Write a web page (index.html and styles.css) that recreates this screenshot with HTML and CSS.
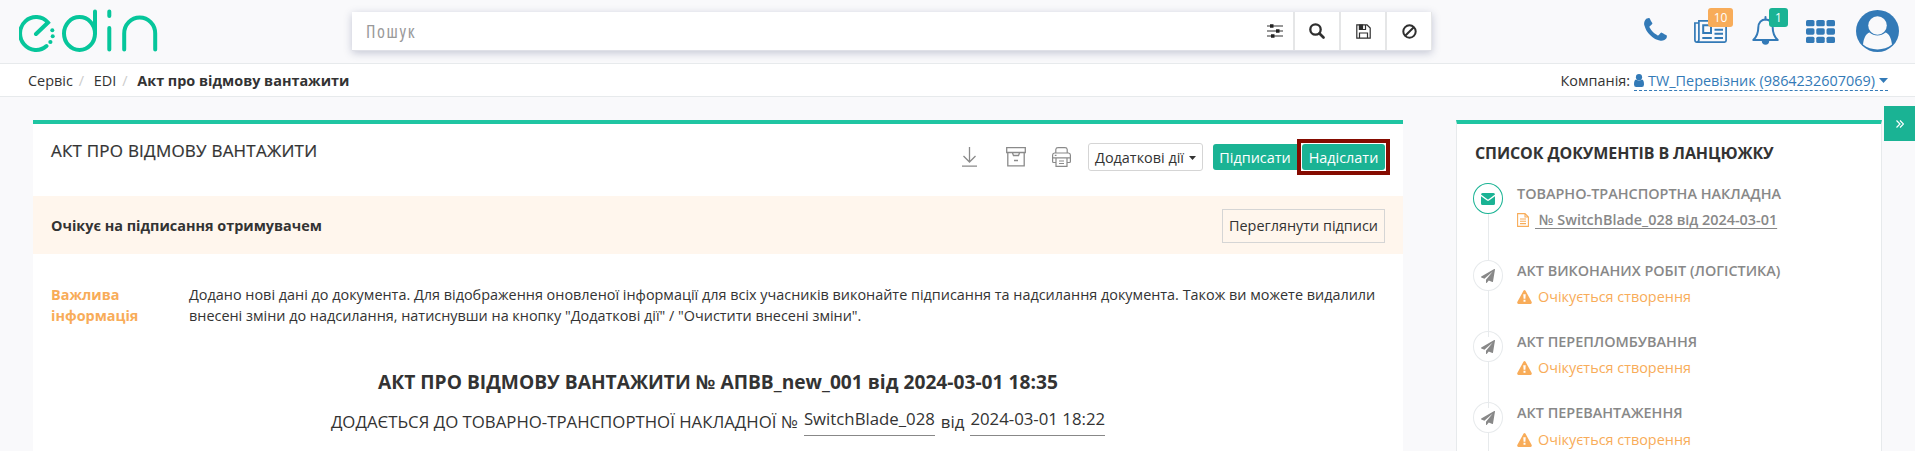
FILE: index.html
```html
<!DOCTYPE html>
<html lang="uk">
<head>
<meta charset="utf-8">
<title>Акт про відмову вантажити</title>
<link rel="stylesheet" href="styles.css">
</head>
<body>
<svg class="defs" width="0" height="0">
  <symbol id="plane" viewBox="0 0 1792 1792"><path d="M1764 11q33 24 27 64l-256 1536q-5 29-32 45-14 8-31 8-11 0-24-5l-453-185-242 295q-18 23-49 23-13 0-22-4-19-7-30.500-23.500t-11.500-36.500v-349l864-1059-1069 925-395-162q-37-14-40-55-2-40 32-59l1664-960q15-9 32-9 20 0 36 11z"/></symbol>
  <symbol id="warn" viewBox="0 0 15 14"><path fill-rule="evenodd" d="M6.600.6Q7.500-.6 8.400.6L14.700 12Q15.200 13.800 13.600 14H1.400Q-.2 13.800.3 12ZM6.300 4.200 6.600 8.700H8.400L8.700 4.200ZM6.500 9.800V11.700H8.500V9.800Z"/></symbol>
</svg>
<header class="topbar">
  <svg class="logo" width="142" height="46" viewBox="0 0 142 46" fill="none" stroke="#06c69b" stroke-width="4" stroke-linecap="round">
    <path d="M17 26 29 14.500A16 16.500 0 1 0 27.500 38"/>
    <ellipse cx="60.500" cy="25.500" rx="15.500" ry="16.500"/>
    <path d="M76 3.500V25M90.300 3.500V8M90.300 20V41.500M105.200 41.500V25.500A15.500 16 0 0 1 136.200 25.500V41.500"/>
    <g fill="#06c69b" stroke="none"><circle cx="33.300" cy="22.300" r="2"/><circle cx="33.700" cy="28.300" r="2"/><circle cx="31.400" cy="34" r="2.100"/></g>
  </svg>
  <div class="search">
    <div class="field"><span class="placeholder">Пошук</span>
      <svg width="16" height="14" viewBox="0 0 16 14"><path stroke="#333" stroke-width="1.200" d="M0 2H16M0 7H16M0 12H16"/><path fill="#222" d="M3 .2h3.500v3.600H3zM9 5.200h3.500v3.600H9zM4 10.200h3.500v3.600H4z"/></svg>
    </div>
    <div class="cell"><svg width="16" height="16" viewBox="0 0 16 16" fill="none" stroke="#2f2f2f"><circle cx="6.500" cy="6.500" r="5.200" stroke-width="2.300"/><path d="m10.500 10.500 4 4" stroke-width="2.600" stroke-linecap="round"/></svg></div>
    <div class="cell"><svg width="15" height="15" viewBox="0 0 15 15" fill="none" stroke="#2f2f2f" stroke-width="1.200"><path d="M.8.8H11L14.200 4V14.200H.8ZM3.500 14V9H11.500V14M3.500 1V5.500H9.500V1"/><path fill="#2f2f2f" d="M3.500 1H6.500V5.500H3.500Z"/></svg></div>
    <div class="cell"><svg width="15" height="15" viewBox="0 0 15 15" fill="none" stroke="#2f2f2f" stroke-width="2"><circle cx="7.500" cy="7.500" r="6.200"/><path d="m3.200 11.800 8.600-8.600"/></svg></div>
  </div>
  <nav class="tools">
    <svg class="phone" width="29" height="29" viewBox="0 0 1792 1792" fill="#337ab7"><path d="M1600 1240q0 27-10 70.500t-21 68.500q-21 50-122 106-94 51-186 51-27 0-53-3.500t-57.500-12.500-47-14.500-55.500-20.500-49-18q-98-35-175-83-127-79-264-216t-216-264q-48-77-83-175-3-9-18-49t-20.500-55.500-14.500-47-12.500-57.500-3.500-53q0-92 51-186 56-101 106-122 25-11 68.500-21t70.500-10q14 0 21 3 18 6 53 76 11 19 30 54t35 63.500 31 53.500q3 4 17.500 25t21.500 35.500 7 28.500q0 20-28.500 50t-62 55-62 53-28.500 46q0 9 5 22.500t8.500 20.500 14 24 11.500 19q76 137 174 235t235 174q2 1 19 11.500t24 14 20.500 8.500 22.500 5q18 0 46-28.500t53-62 55-62 50-28.500q14 0 28.500 7t35.500 21.500 25 17.500q25 15 53.500 31t63.500 35 54 30q70 35 76 53 3 7 3 21z"/></svg>
    <div class="news"><svg width="33" height="23" viewBox="0 0 33 23" fill="none" stroke="#337ab7" stroke-width="1.700"><path d="M4.900 3H.9V20Q1 22.100 2.900 22.100H30.500Q32.100 22 32.100 20.500V.9H4.900V19.500Q4.900 22 2.900 22.100"/><path d="M9.200 5.200H17V13H9.200ZM20.500 5.200H29M20.500 9.700H29M20.500 13.800H29M8.300 18H17.800M20.500 18H29" stroke-width="2"/></svg><span class="badge orange">10</span></div>
    <div class="bell"><svg width="27" height="29" viewBox="0 0 27 29" fill="none" stroke="#337ab7" stroke-width="2"><path d="M1.300 24C5 20.500 6.300 17 6.300 11.500 6.300 6.500 9.500 3.400 13.500 3.400S20.700 6.500 20.700 11.500C20.700 17 22 20.500 25.700 24Z" stroke-linejoin="round"/><path d="M13.500 3.500V1" stroke-linecap="round"/><path fill="#337ab7" stroke="none" d="M9.800 25H17.200Q17 28.800 13.500 28.800T9.800 25Z"/></svg><span class="badge green">1</span></div>
    <svg class="grid" width="29" height="23" viewBox="0 0 29 23" fill="#337ab7"><rect width="8.500" height="6.300" rx="1.600"/><rect x="10.250" width="8.500" height="6.300" rx="1.600"/><rect x="20.500" width="8.500" height="6.300" rx="1.600"/><rect y="8.350" width="8.500" height="6.300" rx="1.600"/><rect x="10.250" y="8.350" width="8.500" height="6.300" rx="1.600"/><rect x="20.500" y="8.350" width="8.500" height="6.300" rx="1.600"/><rect y="16.700" width="8.500" height="6.300" rx="1.600"/><rect x="10.250" y="16.700" width="8.500" height="6.300" rx="1.600"/><rect x="20.500" y="16.700" width="8.500" height="6.300" rx="1.600"/></svg>
    <svg class="user" width="43" height="42" viewBox="0 0 43 42"><ellipse cx="21.500" cy="21" rx="21.500" ry="21" fill="#337ab7"/><path fill="#f9f9fb" d="M7 34.500C7.700 28 10 23.600 13.500 22.500 18 26.500 25 26.500 29.500 22.500 33 23.600 35.300 28 36 34.500 28 41 15 41 7 34.500Z"/><circle cx="21.500" cy="15.500" r="9.300" fill="#f9f9fb"/></svg>
  </nav>
</header>
<div class="crumbs">
  <div class="path"><span>Сервіс</span><i>/</i><span>EDI</span><i>/</i><b>Акт про відмову вантажити</b></div>
  <div class="company">Компанія: <a><svg width="10" height="13" viewBox="0 0 10 13" fill="#337ab7"><path d="M2 5.500Q0 6 0 10.500 0 13 2.200 13H7.800Q10 13 10 10.500 10 6 8 5.500 5 7.500 2 5.500Z"/><circle cx="5" cy="3.200" r="3.100"/></svg> <span class="name">TW_Перевізник (9864232607069)</span> <svg class="caret" width="9" height="5" viewBox="0 0 9 5"><path fill="#337ab7" d="M0 0H9L4.500 5Z"/></svg></a></div>
</div>
<main class="content">
  <section class="doc">
    <div class="dochead">
      <h5>АКТ ПРО ВІДМОВУ ВАНТАЖИТИ</h5>
      <div class="actions">
        <svg class="dl" width="15" height="20" viewBox="0 0 15 20" fill="none" stroke="#8a8a8a" stroke-width="1.300"><path d="M7.500 0V14.500M1.500 9l6 6 6-6M0 19.200H15"/></svg>
        <svg class="arch" width="20" height="20" viewBox="0 0 20 20" fill="none" stroke="#8a8a8a" stroke-width="1.300"><path d="M.7.700H19.300V5.500H.7ZM1.800 5.500V18.800H18.200V5.500M6.500 6 7.500 8.500H12.500L13.500 6M8 13.500H12"/></svg>
        <svg class="print" width="19" height="20" viewBox="0 0 19 20" fill="none" stroke="#8a8a8a" stroke-width="1.200"><path d="M3.800 6V2.500Q4 .7 6 .7H13Q15 .7 15.200 2.500V6M4 15.500H1.500Q.6 15.500.6 14.500V8Q.7 6.200 2.500 6H16.500Q18.300 6.200 18.400 8V14.500Q18.400 15.500 17.500 15.500H15M.6 10.800H18.400M4 11V19.300H15V11M7 14H12M7 16.500H12M2.800 8.400H4.500"/></svg>
        <button class="btn more">Додаткові дії<svg width="7" height="4" viewBox="0 0 7 4"><path fill="#333" d="M0 0H7L3.500 4Z"/></svg></button>
        <button class="btn sign">Підписати</button>
        <div class="mark"><button class="btn send">Надіслати</button></div>
      </div>
    </div>
    <div class="status"><b>Очікує на підписання отримувачем</b><button class="sigs">Переглянути підписи</button></div>
    <div class="info">
      <b>Важлива інформація</b>
      <p>Додано нові дані до документа. Для відображення оновленої інформації для всіх учасників виконайте підписання та надсилання документа. Також ви можете видалили<br>внесені зміни до надсилання, натиснувши на кнопку "Додаткові дії" / "Очистити внесені зміни".</p>
    </div>
    <h3>АКТ ПРО ВІДМОВУ ВАНТАЖИТИ № АПВВ_new_001 від 2024-03-01 18:35</h3>
    <div class="attach"><span>ДОДАЄТЬСЯ ДО ТОВАРНО-ТРАНСПОРТНОЇ НАКЛАДНОЇ №</span><span class="val">SwitchBlade_028</span><span>від</span><span class="val">2024-03-01 18:22</span></div>
  </section>
  <aside class="chain">
    <h4>СПИСОК ДОКУМЕНТІВ В ЛАНЦЮЖКУ</h4>
    <div class="step first">
      <div class="dot on"><svg width="14" height="12" viewBox="0 0 14 12" fill="#1ab394"><path d="M0 1.500Q0 0 1.500 0H12.500Q14 0 14 1.500L7.600 6.200Q7 6.600 6.400 6.200ZM0 3.300 6 7.600Q7 8.200 8 7.600L14 3.300V10.500Q14 12 12.500 12H1.500Q0 12 0 10.500Z"/></svg></div>
      <div class="txt"><strong>ТОВАРНО-ТРАНСПОРТНА НАКЛАДНА</strong>
      <div class="link"><svg width="12" height="14" viewBox="0 0 12 14" fill="none" stroke="#f8ac59" stroke-width="1.100"><path d="M.6.6H8L11.400 4V13.400H.6ZM8 .6V4H11.400M3 6H9M3 8.300H9M3 10.600H9"/></svg><a>&nbsp;№ SwitchBlade_028 від 2024-03-01</a></div></div>
    </div>
    <div class="step"><div class="dot"><svg width="14" height="14"><use href="#plane"/></svg></div><div class="txt"><strong>АКТ ВИКОНАНИХ РОБІТ (ЛОГІСТИКА)</strong><div class="wait"><svg width="15" height="14"><use href="#warn"/></svg>Очікується створення</div></div></div>
    <div class="step"><div class="dot"><svg width="14" height="14"><use href="#plane"/></svg></div><div class="txt"><strong>АКТ ПЕРЕПЛОМБУВАННЯ</strong><div class="wait"><svg width="15" height="14"><use href="#warn"/></svg>Очікується створення</div></div></div>
    <div class="step"><div class="dot"><svg width="14" height="14"><use href="#plane"/></svg></div><div class="txt"><strong>АКТ ПЕРЕВАНТАЖЕННЯ</strong><div class="wait"><svg width="15" height="14"><use href="#warn"/></svg>Очікується створення</div></div></div>
  </aside>
</main>
<button class="toggle"><svg width="8" height="8" viewBox="0 0 8 8" fill="none" stroke="#fff" stroke-width="1.200"><path d="M.5.500 4 4 .5 7.500M4 .500 7.500 4 4 7.500"/></svg></button>
</body>
</html>
```

FILE: styles.css
```css
* { box-sizing: border-box; }
html, body { margin: 0; height: 451px; overflow: hidden; }
body { background: #f9f9fb; color: #333; font: 14.41px/20px "Open Sans", "Noto Sans", sans-serif; }
svg { flex: none; }
h3, h4, h5, p { margin: 0; }
button { font: inherit; color: inherit; padding: 0; }
.defs { position: absolute; }
.topbar { height: 64px; border-bottom: 1px solid #e7eaec; display: flex; align-items: flex-start; }
.logo { margin: 8px 0 0 19px; }
.search { margin: 12px 0 0 191px; width: 1080px; height: 39px; display: flex; background: #fff; border-bottom: 1px solid #dfe0e7; border-right: 1px solid #e5e6e7; box-shadow: 0 2px 8px rgba(40, 50, 100, .25); }
.field { width: 941px; padding: 0 10px 0 14px; display: flex; align-items: center; justify-content: space-between; }
.placeholder { font-size: 18px; font-stretch: 75%; color: #999; letter-spacing: 1.6px; }
.cell { width: 46px; border-left: 2px solid #e5e6e7; display: flex; align-items: center; justify-content: center; }
.tools { margin-left: auto; width: 277px; display: flex; align-items: flex-start; }
.phone { margin: 16px 0 0 3px; }
.news { position: relative; margin: 20px 0 0 24px; height: 23px; }
.bell { position: relative; margin: 16px 0 0 25px; height: 29px; }
.grid { margin: 20px 0 0 27px; }
.user { margin: 10px 0 0 21px; }
.badge { position: absolute; color: #fff; font-size: 12px; line-height: 19px; height: 19px; text-align: center; border-radius: 3px; }
.orange { background: #f8ac59; width: 25px; left: 14px; top: -12px; }
.green { background: #1ab394; width: 19px; left: 17px; top: -8px; }
.crumbs { height: 33px; background: #fff; border-bottom: 1px solid #e7eaec; display: flex; justify-content: space-between; padding: 7px 27px 0 28px; }
.path { display: flex; }
.path i { font-style: normal; color: #ccc; width: 21px; padding-left: 6px; }
.company { display: flex; gap: 4px; }
.company a { color: #337ab7; border-bottom: 1px dashed #337ab7; height: 20px; display: flex; gap: 4px; align-items: center; }
.content { display: flex; align-items: flex-start; gap: 53px; padding: 23px 32px 0 33px; }
.doc { flex: none; width: 1370px; height: 340px; background: #fff; border-top: 4px solid #1fc5a2; }
.dochead { height: 72px; padding: 0 13px 0 18px; display: flex; justify-content: space-between; align-items: flex-start; }
h5 { font-size: 17px; font-weight: 500; margin-top: 17px; letter-spacing: .22px; -webkit-text-stroke: .2px #333; }
.actions { display: flex; align-items: center; height: 36px; margin-top: 15px; }
.arch { margin-left: 29px; }
.print { margin: 0 17px 0 26px; }
.btn { border: 0; border-radius: 3px; height: 26px; white-space: nowrap; padding-top: 1px; }
.more { border: 1px solid #d5d5d5; background: #fff; height: 28px; width: 115px; display: flex; align-items: center; justify-content: center; gap: 5px; }
.sign, .send { background: #1ab394; color: #fff; }
.sign { width: 84px; margin-left: 10px; border-radius: 3px 0 0 3px; }
.mark { border: 4px solid #850b00; width: 93px; height: 36px; display: flex; align-items: center; justify-content: center; }
.send { width: 83px; }
.status { height: 58px; background: #fff6ed; padding: 1px 18px 0; display: flex; justify-content: space-between; align-items: center; }
.sigs { width: 163px; height: 34px; border: 1px solid #d5d5d5; background: transparent; }
.info { display: flex; padding: 30px 18px 0; line-height: 21px; }
.info b { width: 138px; padding-right: 30px; color: #f8ac59; }
.info p { white-space: nowrap; }
h3 { font-size: 19.2px; line-height: 24px; font-weight: 700; text-align: center; margin-top: 44px; }
.attach { display: flex; justify-content: center; font-size: 16.8px; line-height: 22px; gap: 6px; margin-top: 17px; }
.attach .val { border-bottom: 1px solid #888; height: 28px; margin-top: -3px; }
.chain { flex: none; width: 426px; height: 340px; overflow: hidden; background: #fff; border: 1px solid #e7eaec; border-width: 4px 1px 0; border-top-color: #1fc5a2; padding: 19px 16px 0; }
h4 { font-size: 16px; line-height: 20px; margin-left: 2px; font-weight: 700; letter-spacing: -.1px; white-space: nowrap; }
.step { display: flex; gap: 14px; height: 71px; color: #888; }
.first { height: 77px; margin-top: 20px; }
.dot { width: 30px; height: 31px; border: 1px solid #e7eaec; border-radius: 50%; display: flex; align-items: center; justify-content: center; flex: none; fill: #888; position: relative; }
.dot::after { content: ""; position: absolute; left: 14px; top: 30px; width: 1px; height: 46px; background: #e7eaec; }
.on { border-color: #1ab394; }
.txt strong { display: block; font-weight: 600; line-height: 20px; margin-top: 1px; white-space: nowrap; }
.link { display: flex; align-items: center; gap: 6px; margin-top: 6px; font-weight: 600; }
.link a { text-decoration: underline; text-underline-offset: 2.5px; white-space: pre; }
.wait { display: flex; align-items: center; gap: 6px; margin-top: 6px; color: #f8ac59; fill: #f8ac59; }
.step:last-child .wait { margin-top: 7px; }
.toggle { position: absolute; right: 0; top: 106px; width: 31px; height: 35px; border: 0; background: #1ab394; display: flex; align-items: center; justify-content: center; }
```
